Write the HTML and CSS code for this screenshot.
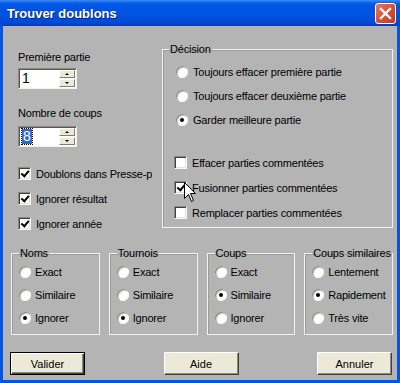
FILE: index.html
```html
<!DOCTYPE html>
<html lang="fr">
<head>
  <meta charset="UTF-8" />
  <title>Trouver doublons</title>
  <link rel="stylesheet" href="styles.css">
</head>
<body>

  <div class="window">
    <div class="titlebar">
      <span class="title">Trouver doublons</span>
      <span class="close">
        <svg width="13" height="13" viewBox="0 0 13 13"><path d="M2 2 L11 11 M11 2 L2 11" stroke="#fff" stroke-width="2.4" stroke-linecap="square"/></svg>
      </span>
    </div>

    <div class="content">
      <div class="top">
        <div class="left-col">
          <div class="field-label first">Première partie</div>
          <div class="spin">
            <span class="spin-value">1</span>
            <span class="spin-btns">
              <span class="spin-btn"><span class="tri up"></span></span>
              <span class="spin-btn"><span class="tri down"></span></span>
            </span>
          </div>

          <div class="field-label second">Nombre de coups</div>
          <div class="spin spin2">
            <span class="spin-value"><span class="selected-text">8</span></span>
            <span class="spin-btns">
              <span class="spin-btn"><span class="tri up"></span></span>
              <span class="spin-btn"><span class="tri down"></span></span>
            </span>
          </div>

          <div class="checks">
            <div class="row check-row"><span class="box checked"></span><span class="clip">Doublons dans Presse-papiers</span></div>
            <div class="row check-row"><span class="box checked"></span><span>Ignorer résultat</span></div>
            <div class="row check-row"><span class="box checked"></span><span>Ignorer année</span></div>
          </div>
        </div>

        <fieldset class="group decision">
          <legend>Décision</legend>
          <div class="radios">
            <div class="row radio-row"><span class="radio"></span><span>Toujours effacer première partie</span></div>
            <div class="row radio-row"><span class="radio"></span><span>Toujours effacer deuxième partie</span></div>
            <div class="row radio-row"><span class="radio on"></span><span>Garder meilleure partie</span></div>
          </div>
          <div class="options">
            <div class="row check-row"><span class="box"></span><span>Effacer parties commentées</span></div>
            <div class="row check-row"><span class="box checked"></span><span>Fusionner parties commentées</span></div>
            <div class="row check-row"><span class="box"></span><span>Remplacer parties commentées</span></div>
          </div>
        </fieldset>
      </div>

      <div class="groups">
        <fieldset class="group small">
          <legend>Noms</legend>
          <div class="row radio-row"><span class="radio"></span><span>Exact</span></div>
          <div class="row radio-row"><span class="radio"></span><span>Similaire</span></div>
          <div class="row radio-row"><span class="radio on"></span><span>Ignorer</span></div>
        </fieldset>
        <fieldset class="group small">
          <legend>Tournois</legend>
          <div class="row radio-row"><span class="radio"></span><span>Exact</span></div>
          <div class="row radio-row"><span class="radio"></span><span>Similaire</span></div>
          <div class="row radio-row"><span class="radio on"></span><span>Ignorer</span></div>
        </fieldset>
        <fieldset class="group small">
          <legend>Coups</legend>
          <div class="row radio-row"><span class="radio"></span><span>Exact</span></div>
          <div class="row radio-row"><span class="radio on"></span><span>Similaire</span></div>
          <div class="row radio-row"><span class="radio"></span><span>Ignorer</span></div>
        </fieldset>
        <fieldset class="group small">
          <legend>Coups similaires</legend>
          <div class="row radio-row"><span class="radio"></span><span>Lentement</span></div>
          <div class="row radio-row"><span class="radio on"></span><span>Rapidement</span></div>
          <div class="row radio-row"><span class="radio"></span><span>Très vite</span></div>
        </fieldset>
      </div>

      <div class="buttons">
        <button class="btn default">Valider</button>
        <button class="btn">Aide</button>
        <button class="btn">Annuler</button>
      </div>
    </div>

    <!-- mouse pointer over the "Fusionner" checkbox -->
    <svg class="cursor" width="13" height="21" viewBox="0 0 13 21">
      <path d="M0.5 0.5 L0.5 16.5 L4.5 12.5 L7.5 19.5 L9.5 18.5 L6.5 11.5 L11.5 11.5 Z" fill="#fff" stroke="#000" stroke-width="1"/>
    </svg>
  </div>

</body>
</html>
```

FILE: styles.css
```css
body {
  margin: 0;
  padding: 0;
  font-family: 'Liberation Sans', Arial, sans-serif;
  font-size: 11px;
  letter-spacing: -0.2px;
  color: #000;
}
.window {
  position: relative;
  width: 400px;
  height: 383px;
  background-color: #0055e5;
  box-sizing: border-box;
  padding: 0 3px 3px 3px;
  display: flex;
  flex-direction: column;
}
.titlebar {
  height: 26px;
  margin: 0 -3px;
  display: flex;
  align-items: center;
  justify-content: space-between;
  padding: 0 4px 0 7px;
  background: linear-gradient(to bottom, #3d8df5 0, #0a5fe8 3px, #0055e5 6px, #0052e0 60%, #0048d4 90%, #003cc0 100%);
}
.title {
  color: #fff;
  font-weight: bold;
  font-size: 13px;
  letter-spacing: 0;
  text-shadow: 1px 1px 0 #0a246a;
  margin-top: 1px;
}
.close {
  width: 19px;
  height: 19px;
  border: 1px solid #fff;
  border-radius: 3px;
  background: linear-gradient(135deg, #e97a5c 0, #d9502f 50%, #c4391b 100%);
  display: flex;
  align-items: center;
  justify-content: center;
}
.content {
  flex: 1;
  background-color: #b4b4b4;
  padding: 16px 4px 0 8px;
}
.top {
  display: flex;
  align-items: flex-start;
}
.left-col {
  width: 151px;
  padding-left: 7px;
  box-sizing: border-box;
}
.field-label {
  line-height: 13px;
}
.field-label.first {
  margin-top: 9px;
}
.field-label.second {
  margin-top: 18px;
}
.spin {
  margin-top: 4px;
  width: 59px;
  height: 21px;
  box-sizing: border-box;
  background: #fff;
  border: 1px solid;
  border-color: #8c8a80 #f4f2ea #f4f2ea #8c8a80;
  box-shadow: inset 1px 1px 0 #5a5850;
  display: flex;
  justify-content: space-between;
  padding: 1px 1px 1px 2px;
}
.spin2 {
  margin-top: 6px;
}
.spin-value {
  font-size: 14px;
  line-height: 17px;
  padding-left: 1px;
}
.selected-text {
  display: inline-block;
  background: #316ac5;
  color: #fff;
  padding: 0 1px;
  outline: 1px dotted #000;
  line-height: 15px;
}
.spin-btns {
  display: flex;
  flex-direction: column;
  gap: 1px;
  width: 16px;
}
.spin-btn {
  flex: 1;
  background: #ece9d8;
  border: 1px solid;
  border-color: #fff #7f7d74 #7f7d74 #fff;
  display: flex;
  align-items: center;
  justify-content: center;
}
.tri {
  width: 0;
  height: 0;
  border-left: 2px solid transparent;
  border-right: 2px solid transparent;
}
.tri.up {
  border-bottom: 2px solid #000;
}
.tri.down {
  border-top: 2px solid #000;
}
.checks {
  margin-top: 14px;
}
.row {
  display: flex;
  align-items: center;
  gap: 5px;
  white-space: nowrap;
}
.check-row {
  height: 25px;
}
.radio-row {
  height: 24px;
}
.clip {
  width: 116px;
  overflow: hidden;
}
.box {
  width: 13px;
  height: 13px;
  flex: none;
  box-sizing: border-box;
  background: #fff;
  border: 1px solid;
  border-color: #8a8a82 #fafafa #fafafa #8a8a82;
  box-shadow: inset 1px 1px 0 #404040, inset -1px -1px 0 #e4e2da;
  position: relative;
}
.box.checked::after {
  content: '';
  position: absolute;
  left: 2px;
  top: 1px;
  width: 6px;
  height: 3px;
  border-left: 2px solid #000;
  border-bottom: 2px solid #000;
  transform: rotate(-50deg) translate(-1px, 1px);
}
.radio {
  width: 12px;
  height: 12px;
  flex: none;
  margin-left: 1px;
  box-sizing: border-box;
  border-radius: 50%;
  background: #fff;
  box-shadow: inset 1px 1px 0 #8a8a82, inset 2px 2px 0 #d6d4cc, inset -1px -1px 0 #f4f4f4;
  position: relative;
}
.radio.on::after {
  content: '';
  position: absolute;
  left: 4px;
  top: 4px;
  width: 4px;
  height: 4px;
  border-radius: 50%;
  background: #000;
}
.group {
  margin: 0;
  min-width: 0;
  border: 1px solid #f2f2f2;
  box-shadow: inset 1px 1px 0 #9c9c9c;
  padding: 0 0 0 6px;
}
.group legend {
  padding: 0 1px;
  line-height: 14px;
  white-space: nowrap;
}
.decision {
  width: 231px;
  height: 186px;
  box-sizing: border-box;
}
.radios {
  padding: 4px 0 0 6px;
}
.options {
  padding: 18px 0 0 5px;
}
.groups {
  margin-top: 10px;
  display: grid;
  grid-template-columns: repeat(4, 1fr);
  column-gap: 9px;
}
.small {
  height: 89px;
  box-sizing: border-box;
  padding-left: 7px;
}
.small .radio-row {
  height: 23px;
  gap: 4px;
}
.small .radio {
  margin-left: 0;
}
.buttons {
  margin: 17px 0 0 -1px;
  display: flex;
  justify-content: space-between;
  padding-right: 1px;
}
.btn {
  width: 75px;
  height: 23px;
  background: #ece9d8;
  font-family: 'Liberation Sans', Arial, sans-serif;
  font-size: 11px;
  color: #000;
  border: 1px solid;
  border-color: #fff #404040 #404040 #fff;
  box-shadow: inset -1px -1px 0 #8c8a80;
  padding: 0;
}
.btn.default {
  border: 1px solid #000;
  box-shadow: inset 1px 1px 0 #fff, inset -1px -1px 0 #404040, inset -2px -2px 0 #8c8a80;
}
.cursor {
  position: absolute;
  left: 184px;
  top: 182px;
}
```
